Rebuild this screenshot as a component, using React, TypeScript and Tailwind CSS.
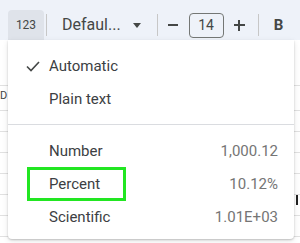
import React from "react";

const rows = [85, 110, 131, 152, 173, 194, 215, 236];

export default function App() {
  return (
    <div
      className="relative w-[300px] h-[243px] overflow-hidden bg-white"
      style={{ fontFamily: "Roboto, 'Liberation Sans', sans-serif" }}
    >
      {/* toolbar */}
      <div className="h-[40px] bg-[#eef2f9] flex items-end pl-[8px]">
        <div className="w-[36px] h-[30px] rounded-t-[4px] bg-[#dfe3ea] flex items-center justify-center text-[12px] text-[#444746] pb-[1px]">
          123
        </div>
        <div className="self-center w-px h-[22px] bg-[#c7c7c7] ml-[2px] mt-[10px]" />
        <div className="self-center flex items-center mt-[10px] ml-[15px] text-[16px] text-[#444746]">
          <span>Defaul...</span>
          <svg width="8" height="5" viewBox="0 0 8 5" className="ml-[12px]">
            <path d="M0 0h8L4 5z" fill="#444746" />
          </svg>
        </div>
        <div className="self-center w-px h-[22px] bg-[#c7c7c7] ml-[16px] mt-[10px]" />
        <div className="self-center mt-[10px] ml-[10px] w-[10px] h-[2px] bg-[#444746]" />
        <div className="self-center mt-[10px] ml-[11px] w-[35px] h-[25px] border border-[#747775] rounded-[4px] flex items-center justify-center text-[14px] text-[#444746]">
          14
        </div>
        <div className="self-center mt-[10px] ml-[10px] relative w-[11px] h-[11px]">
          <div className="absolute left-0 top-[4.5px] w-[11px] h-[2px] bg-[#444746]" />
          <div className="absolute top-0 left-[4.5px] w-[2px] h-[11px] bg-[#444746]" />
        </div>
        <div className="self-center w-px h-[22px] bg-[#c7c7c7] ml-[13px] mt-[10px]" />
        <div className="self-center mt-[10px] ml-[15px] text-[15px] font-bold text-[#444746]">B</div>
      </div>

      {/* sheet grid behind */}
      <div className="absolute inset-x-0 top-[40px] bottom-0">
        {rows.map((y) => (
          <div
            key={y}
            className="absolute left-0 right-0 h-px bg-[#e1e1e1]"
            style={{ top: y - 40 }}
          />
        ))}
        <div className="absolute left-0 top-[48px] text-[11px] text-[#444]">D</div>
        <div className="absolute right-[2px] top-[155px] w-[2px] h-[10px] bg-[#222]" />
      </div>

      {/* menu */}
      <div className="absolute left-[8px] top-[40px] w-[286px] h-[199px] bg-white rounded-b-[4px] shadow-[0_1px_2px_rgba(0,0,0,0.2),0_2px_6px_rgba(0,0,0,0.1)]">
        <div className="pt-[10px]">
          <div className="h-[33px] flex items-center">
            <svg width="14" height="11" viewBox="0 0 14 11" className="ml-[18px]">
              <path d="M1 5.5l4 4L13 1" stroke="#444746" strokeWidth="1.6" fill="none" />
            </svg>
            <span className="ml-[9px] text-[15px] text-[#3c4043]">Automatic</span>
          </div>
          <div className="h-[33px] flex items-center">
            <span className="ml-[41px] text-[15px] text-[#3c4043]">Plain text</span>
          </div>
        </div>
        <div className="mt-[8px] h-px bg-[#dadce0]" />
        <div className="pt-[10px]">
          <div className="h-[33px] flex items-center justify-between pr-[16px]">
            <span className="ml-[41px] text-[15px] text-[#3c4043]">Number</span>
            <span className="text-[15px] text-[#757575]">1,000.12</span>
          </div>
          <div className="h-[33px] flex items-center justify-between pr-[16px]">
            <span className="ml-[41px] text-[15px] text-[#3c4043]">Percent</span>
            <span className="text-[15px] text-[#757575]">10.12%</span>
          </div>
          <div className="h-[33px] flex items-center justify-between pr-[16px]">
            <span className="ml-[41px] text-[15px] text-[#3c4043]">Scientific</span>
            <span className="text-[15px] text-[#757575]">1.01E+03</span>
          </div>
        </div>
        <div className="absolute left-[19px] top-[127px] w-[99px] h-[34px] border-[3px] border-[#22e622]" />
      </div>
    </div>
  );
}
